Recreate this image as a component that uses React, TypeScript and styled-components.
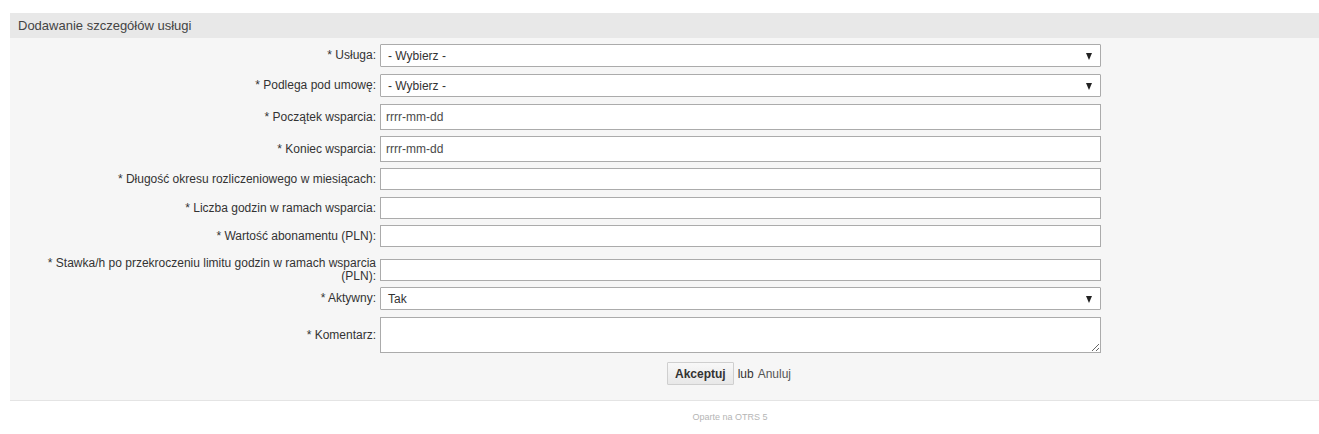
import React, { FC } from "react";
import styled, { createGlobalStyle } from "styled-components";

const GlobalStyle = createGlobalStyle`
  html, body {
    margin: 0;
    padding: 0;
    background: #fff;
    font-family: "Liberation Sans", Arial, sans-serif;
    overflow: hidden;
  }
`;

type FieldRow = { label: string; gap: number; lift?: number } & (
  | { kind: "select"; value: string }
  | { kind: "text"; placeholder?: string; tall?: boolean }
  | { kind: "textarea" }
);

const rows: FieldRow[] = [
  { kind: "select", label: "* Usługa:", value: "- Wybierz -", gap: 7 },
  { kind: "select", label: "* Podlega pod umowę:", value: "- Wybierz -", gap: 7 },
  { kind: "text", label: "* Początek wsparcia:", placeholder: "rrrr-mm-dd", tall: true, gap: 6 },
  { kind: "text", label: "* Koniec wsparcia:", placeholder: "rrrr-mm-dd", tall: true, gap: 6 },
  { kind: "text", label: "* Długość okresu rozliczeniowego w miesiącach:", gap: 7 },
  { kind: "text", label: "* Liczba godzin w ramach wsparcia:", gap: 6 },
  { kind: "text", label: "* Wartość abonamentu (PLN):", gap: 6 },
  {
    kind: "text",
    label: "* Stawka/h po przekroczeniu limitu godzin w ramach wsparcia (PLN):",
    gap: 4,
    lift: 4,
  },
  { kind: "select", label: "* Aktywny:", value: "Tak", gap: 7 },
  { kind: "textarea", label: "* Komentarz:", gap: 0 },
];

const App: FC = () => {
  return (
    <Root>
      <GlobalStyle />
      <Panel>
        <PanelHeader>Dodawanie szczegółów usługi</PanelHeader>
        <PanelBody>
          {rows.map((row) => (
            <Row key={row.label} $gap={row.gap} $lift={row.lift ?? 0}>
              <Label>{row.label}</Label>
              {row.kind === "select" && (
                <SelectBox>
                  <SelectValue>{row.value}</SelectValue>
                  <Arrow />
                </SelectBox>
              )}
              {row.kind === "text" && (
                <TextInput $tall={row.tall} placeholder={row.placeholder} />
              )}
              {row.kind === "textarea" && <TextArea />}
            </Row>
          ))}
          <Actions>
            <SubmitButton>Akceptuj</SubmitButton>
            <Or>lub</Or>
            <CancelLink href="#">Anuluj</CancelLink>
          </Actions>
        </PanelBody>
      </Panel>
      <Footer>Oparte na OTRS 5</Footer>
    </Root>
  );
};

export default App;

const Root = styled.div`
  width: 100%;
  padding-top: 13px;
`;

const Panel = styled.div`
  margin-left: 10px;
  background: #f6f6f6;
  border-bottom: 1px solid #e4e4e4;
`;

const PanelHeader = styled.div`
  height: 25px;
  line-height: 25px;
  padding-left: 8px;
  background: #e8e8e8;
  color: #444;
  font-size: 13px;
`;

const PanelBody = styled.div`
  padding: 6px 0 15px;
`;

const Row = styled.div<{ $gap: number; $lift: number }>`
  display: flex;
  align-items: center;
  padding-top: ${(p) => p.$lift}px;
  padding-bottom: ${(p) => p.$gap}px;
`;

const Label = styled.label`
  flex: 0 0 336px;
  margin-left: 30px;
  padding-right: 4px;
  text-align: right;
  font-size: 12px;
  line-height: 13px;
  color: #333;
`;

const SelectBox = styled.div`
  position: relative;
  box-sizing: border-box;
  width: 721px;
  height: 23px;
  display: flex;
  align-items: center;
  padding-left: 7px;
  background: #fff;
  border: 1px solid #ababab;
  border-radius: 1px;
`;

const SelectValue = styled.span`
  font-size: 12px;
  color: #333;
`;

const Arrow = styled.span`
  position: absolute;
  right: 8px;
  top: 8px;
  width: 0;
  height: 0;
  border-left: 3.5px solid transparent;
  border-right: 3.5px solid transparent;
  border-top: 7px solid #222;
`;

const TextInput = styled.input<{ $tall?: boolean }>`
  box-sizing: border-box;
  width: 721px;
  height: ${(p) => (p.$tall ? "26px" : "22px")};
  margin: 0;
  padding: 0 5px;
  background: #fff;
  border: 1px solid #ababab;
  font-family: "Liberation Sans", Arial, sans-serif;
  font-size: 12px;
  color: #333;
  outline: none;

  &::placeholder {
    color: #4a4a4a;
  }
`;

const TextArea = styled.textarea`
  display: block;
  box-sizing: border-box;
  width: 721px;
  height: 36px;
  margin: 0;
  padding: 3px 5px;
  background: #fff;
  border: 1px solid #ababab;
  font-family: "Liberation Sans", Arial, sans-serif;
  font-size: 12px;
  outline: none;
`;

const Actions = styled.div`
  display: flex;
  align-items: center;
  justify-content: center;
  width: 700px;
  margin: 9px 0 0 369px;
  font-size: 12px;
`;

const SubmitButton = styled.button`
  box-sizing: border-box;
  height: 23px;
  padding: 0 7px;
  background: linear-gradient(#f8f8f8, #e8e8e8);
  border: 1px solid #cfcfcf;
  border-radius: 1px;
  font-family: "Liberation Sans", Arial, sans-serif;
  font-size: 12px;
  font-weight: bold;
  color: #333;
`;

const Or = styled.span`
  margin-left: 4px;
  color: #333;
`;

const CancelLink = styled.a`
  margin-left: 4px;
  color: #555;
  text-decoration: none;
`;

const Footer = styled.div`
  padding: 11px 0 0 141px;
  text-align: center;
  font-size: 9px;
  color: #b5b5b5;
`;
